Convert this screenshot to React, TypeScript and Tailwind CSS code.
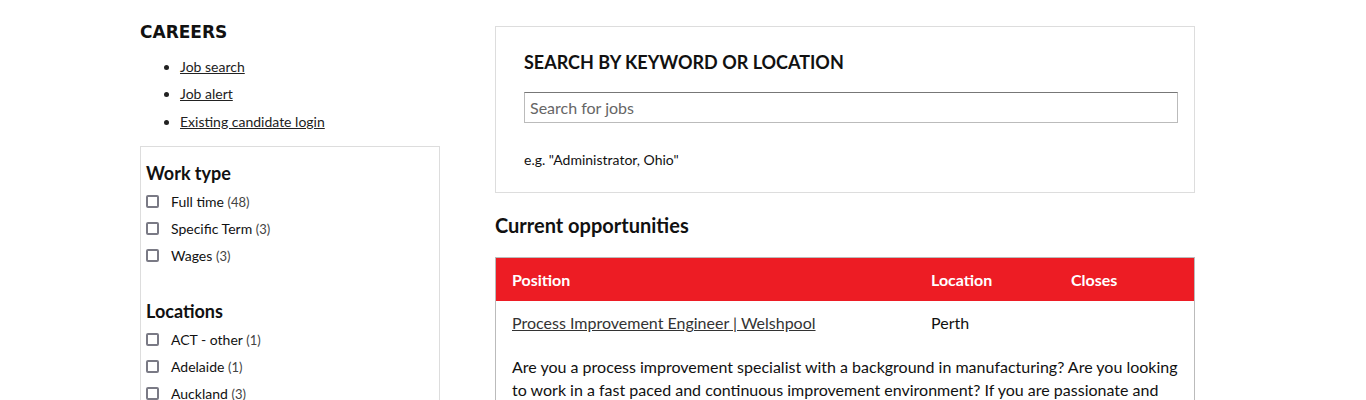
import React from "react";

const workTypes = [
  { label: "Full time", count: 48 },
  { label: "Specific Term", count: 3 },
  { label: "Wages", count: 3 },
];

const locations = [
  { label: "ACT - other", count: 1 },
  { label: "Adelaide", count: 1 },
  { label: "Auckland", count: 3 },
  { label: "Brisbane", count: 4 },
];

function FilterItem({ label, count }: { label: string; count: number }) {
  return (
    <label className="flex items-center h-[27px] text-[14px] text-[#111]">
      <span className="w-[13px] h-[13px] border-2 border-[#7a7a85] rounded-[2px] mr-[12px] shrink-0" />
      <span>
        {label} <span className="text-[#444] text-[13px]">({count})</span>
      </span>
    </label>
  );
}

export default function App() {
  return (
    <div className="min-h-screen bg-white font-['Lato','Noto_Sans',sans-serif] text-[#111]">
      <div className="flex pl-[140px] pt-[22px] gap-[55px]">
        {/* sidebar */}
        <aside className="w-[300px] shrink-0">
          <h2 className="font-['DejaVu_Sans',sans-serif] font-bold text-[17px] leading-[20px]">
            CAREERS
          </h2>
          <ul className="list-disc pl-[40px] mt-[15px] mb-[8px] text-[14px] text-[#222]">
            <li className="h-[27px] leading-[20px]">
              <a href="#" className="underline">Job search</a>
            </li>
            <li className="h-[28px] leading-[20px]">
              <a href="#" className="underline">Job alert</a>
            </li>
            <li className="h-[26px] leading-[20px]">
              <a href="#" className="underline">Existing candidate login</a>
            </li>
          </ul>
          <div className="border border-[#ddd] px-[5px] pt-[14px] pb-[20px]">
            <h3 className="font-bold text-[18px] leading-[24px] mb-[3px]">Work type</h3>
            {workTypes.map((w) => (
              <FilterItem key={w.label} {...w} />
            ))}
            <h3 className="font-bold text-[18px] leading-[24px] mt-[30px] mb-[3px]">Locations</h3>
            {locations.map((l) => (
              <FilterItem key={l.label} {...l} />
            ))}
          </div>
        </aside>

        {/* main */}
        <main className="w-[700px] shrink-0 mt-[4px]">
          <section className="border border-[#ddd] pl-[28px] pr-[16px] pt-[23px] pb-[23px]">
            <h2 className="font-bold text-[18px] leading-[24px]">SEARCH BY KEYWORD OR LOCATION</h2>
            <input
              type="text"
              placeholder="Search for jobs"
              className="mt-[18px] w-full h-[31px] border border-[#bbb] border-t-[#777] px-[5px] text-[16px] placeholder:text-[#666] outline-none"
            />
            <p className="mt-[28px] text-[14px] leading-[18px]">e.g. "Administrator, Ohio"</p>
          </section>

          <h2 className="font-bold text-[20px] leading-[26px] mt-[19px]">Current opportunities</h2>

          <div className="mt-[19px] border border-[#bbb]">
            <div className="flex bg-[#ed1c24] text-white font-bold text-[16px] h-[43px] items-center">
              <div className="w-[419px] pl-[16px]">Position</div>
              <div className="w-[140px] pl-[16px]">Location</div>
              <div className="pl-[16px]">Closes</div>
            </div>
            <div className="flex h-[44px] items-center text-[16px]">
              <div className="w-[419px] pl-[16px]">
                <a href="#" className="underline text-[#333]">Process Improvement Engineer | Welshpool</a>
              </div>
              <div className="w-[140px] pl-[16px]">Perth</div>
            </div>
            <p className="pl-[16px] pr-[6px] pt-[10px] text-[16px] leading-[23px]">
              Are you a process improvement specialist with a background in manufacturing? Are you looking
              to work in a fast paced and continuous improvement environment? If you are passionate and
              proactive, then we would like to speak to you about this fantastic career opportunity.
            </p>
          </div>
        </main>
      </div>
    </div>
  );
}
